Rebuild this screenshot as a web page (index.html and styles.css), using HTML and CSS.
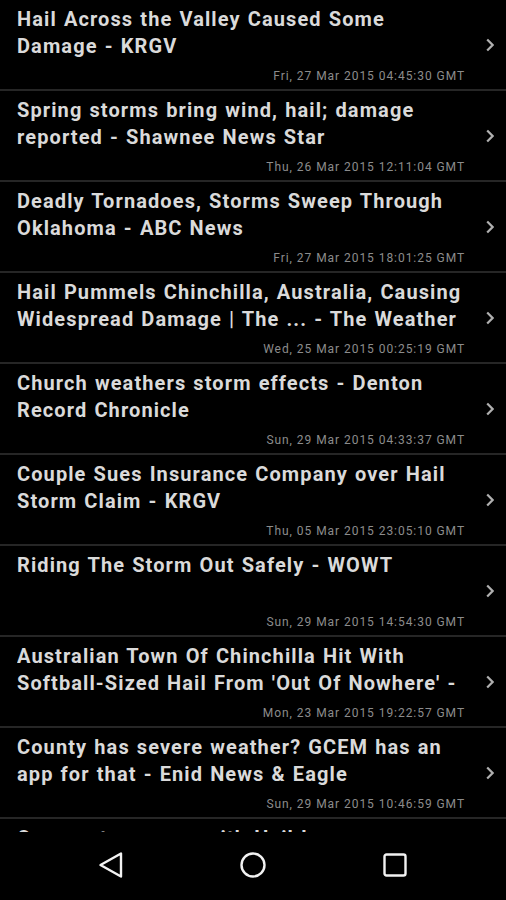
FILE: index.html
```html
<!DOCTYPE html>
<html>
<head>
<meta charset="utf-8">
<link rel="stylesheet" href="styles.css">
</head>
<body>
<div class="screen">
  <ul class="list">
    <li class="item"><div class="content"><div class="title">Hail Across the Valley Caused Some Damage - KRGV</div><div class="date">Fri, 27 Mar 2015 04:45:30 GMT</div></div><svg class="chev" viewBox="0 0 8 14"><path d="M1.2 1.5 L6.6 7 L1.2 12.5"/></svg></li>
    <li class="item"><div class="content"><div class="title">Spring storms bring wind, hail; damage reported - Shawnee News Star</div><div class="date">Thu, 26 Mar 2015 12:11:04 GMT</div></div><svg class="chev" viewBox="0 0 8 14"><path d="M1.2 1.5 L6.6 7 L1.2 12.5"/></svg></li>
    <li class="item"><div class="content"><div class="title">Deadly Tornadoes, Storms Sweep Through Oklahoma - ABC News</div><div class="date">Fri, 27 Mar 2015 18:01:25 GMT</div></div><svg class="chev" viewBox="0 0 8 14"><path d="M1.2 1.5 L6.6 7 L1.2 12.5"/></svg></li>
    <li class="item"><div class="content"><div class="title">Hail Pummels Chinchilla, Australia, Causing Widespread Damage | The ... - The Weather</div><div class="date">Wed, 25 Mar 2015 00:25:19 GMT</div></div><svg class="chev" viewBox="0 0 8 14"><path d="M1.2 1.5 L6.6 7 L1.2 12.5"/></svg></li>
    <li class="item"><div class="content"><div class="title">Church weathers storm effects - Denton Record Chronicle</div><div class="date">Sun, 29 Mar 2015 04:33:37 GMT</div></div><svg class="chev" viewBox="0 0 8 14"><path d="M1.2 1.5 L6.6 7 L1.2 12.5"/></svg></li>
    <li class="item"><div class="content"><div class="title">Couple Sues Insurance Company over Hail Storm Claim - KRGV</div><div class="date">Thu, 05 Mar 2015 23:05:10 GMT</div></div><svg class="chev" viewBox="0 0 8 14"><path d="M1.2 1.5 L6.6 7 L1.2 12.5"/></svg></li>
    <li class="item"><div class="content"><div class="title">Riding The Storm Out Safely - WOWT</div><div class="date">Sun, 29 Mar 2015 14:54:30 GMT</div></div><svg class="chev" viewBox="0 0 8 14"><path d="M1.2 1.5 L6.6 7 L1.2 12.5"/></svg></li>
    <li class="item"><div class="content"><div class="title">Australian Town Of Chinchilla Hit With Softball&#8209;Sized Hail From 'Out Of Nowhere' -</div><div class="date">Mon, 23 Mar 2015 19:22:57 GMT</div></div><svg class="chev" viewBox="0 0 8 14"><path d="M1.2 1.5 L6.6 7 L1.2 12.5"/></svg></li>
    <li class="item"><div class="content"><div class="title">County has severe weather? GCEM has an app for that - Enid News &amp; Eagle</div><div class="date">Sun, 29 Mar 2015 10:46:59 GMT</div></div><svg class="chev" viewBox="0 0 8 14"><path d="M1.2 1.5 L6.6 7 L1.2 12.5"/></svg></li>
    <li class="item"><div class="content"><div class="title">Cooperstown man with Hail Insurance builds</div><div class="date">Sat, 28 Mar 2015 09:12:00 GMT</div></div><svg class="chev" viewBox="0 0 8 14"><path d="M1.2 1.5 L6.6 7 L1.2 12.5"/></svg></li>
  </ul>
  <nav class="navbar">
    <svg class="nav-icon" viewBox="0 0 28 28"><path d="M24 2.5 L24 25.5 L3.5 14 Z"/></svg>
    <svg class="nav-icon" viewBox="0 0 28 28"><circle cx="14" cy="14" r="11.5"/></svg>
    <svg class="nav-icon" viewBox="0 0 28 28"><rect x="3.5" y="3.5" width="21" height="21" rx="2"/></svg>
  </nav>
</div>
</body>
</html>
```
FILE: styles.css
```css
html, body {
  margin: 0;
  padding: 0;
  background: #000;
}
.screen {
  width: 506px;
  height: 900px;
  overflow: hidden;
  display: flex;
  flex-direction: column;
  background: #000;
  font-family: Roboto, "Noto Sans", sans-serif;
}
.list {
  list-style: none;
  margin: 0;
  padding: 0;
  height: 832px;
  overflow: hidden;
  flex: none;
}
.item {
  height: 89px;
  border-bottom: 2px solid #262626;
  display: flex;
  align-items: center;
}
.content {
  flex: 1;
  min-width: 0;
  padding: 6px 0 0 17px;
  height: 83px;
  display: flex;
  flex-direction: column;
}
.title {
  font-size: 20px;
  font-weight: 700;
  line-height: 27px;
  letter-spacing: 1.1px;
  word-spacing: 1px;
  color: #dadada;
  height: 54px;
  overflow: hidden;
}
.date {
  margin-top: 9px;
  font-size: 12px;
  line-height: 15px;
  letter-spacing: 0.95px;
  color: #8c8c8c;
  text-align: right;
  margin-right: 1px;
}
.chev {
  width: 8px;
  height: 14px;
  margin: 0 12px 0 20px;
  flex: none;
  fill: none;
  stroke: #b0b0b0;
  stroke-width: 2.2;
}
.navbar {
  flex: 1;
  display: flex;
  justify-content: center;
  align-items: center;
  gap: 114px;
  padding-bottom: 2px;
}
.nav-icon {
  width: 28px;
  height: 28px;
  fill: none;
  stroke: #f2f2f2;
  stroke-width: 2.4;
  stroke-linejoin: round;
}
```
